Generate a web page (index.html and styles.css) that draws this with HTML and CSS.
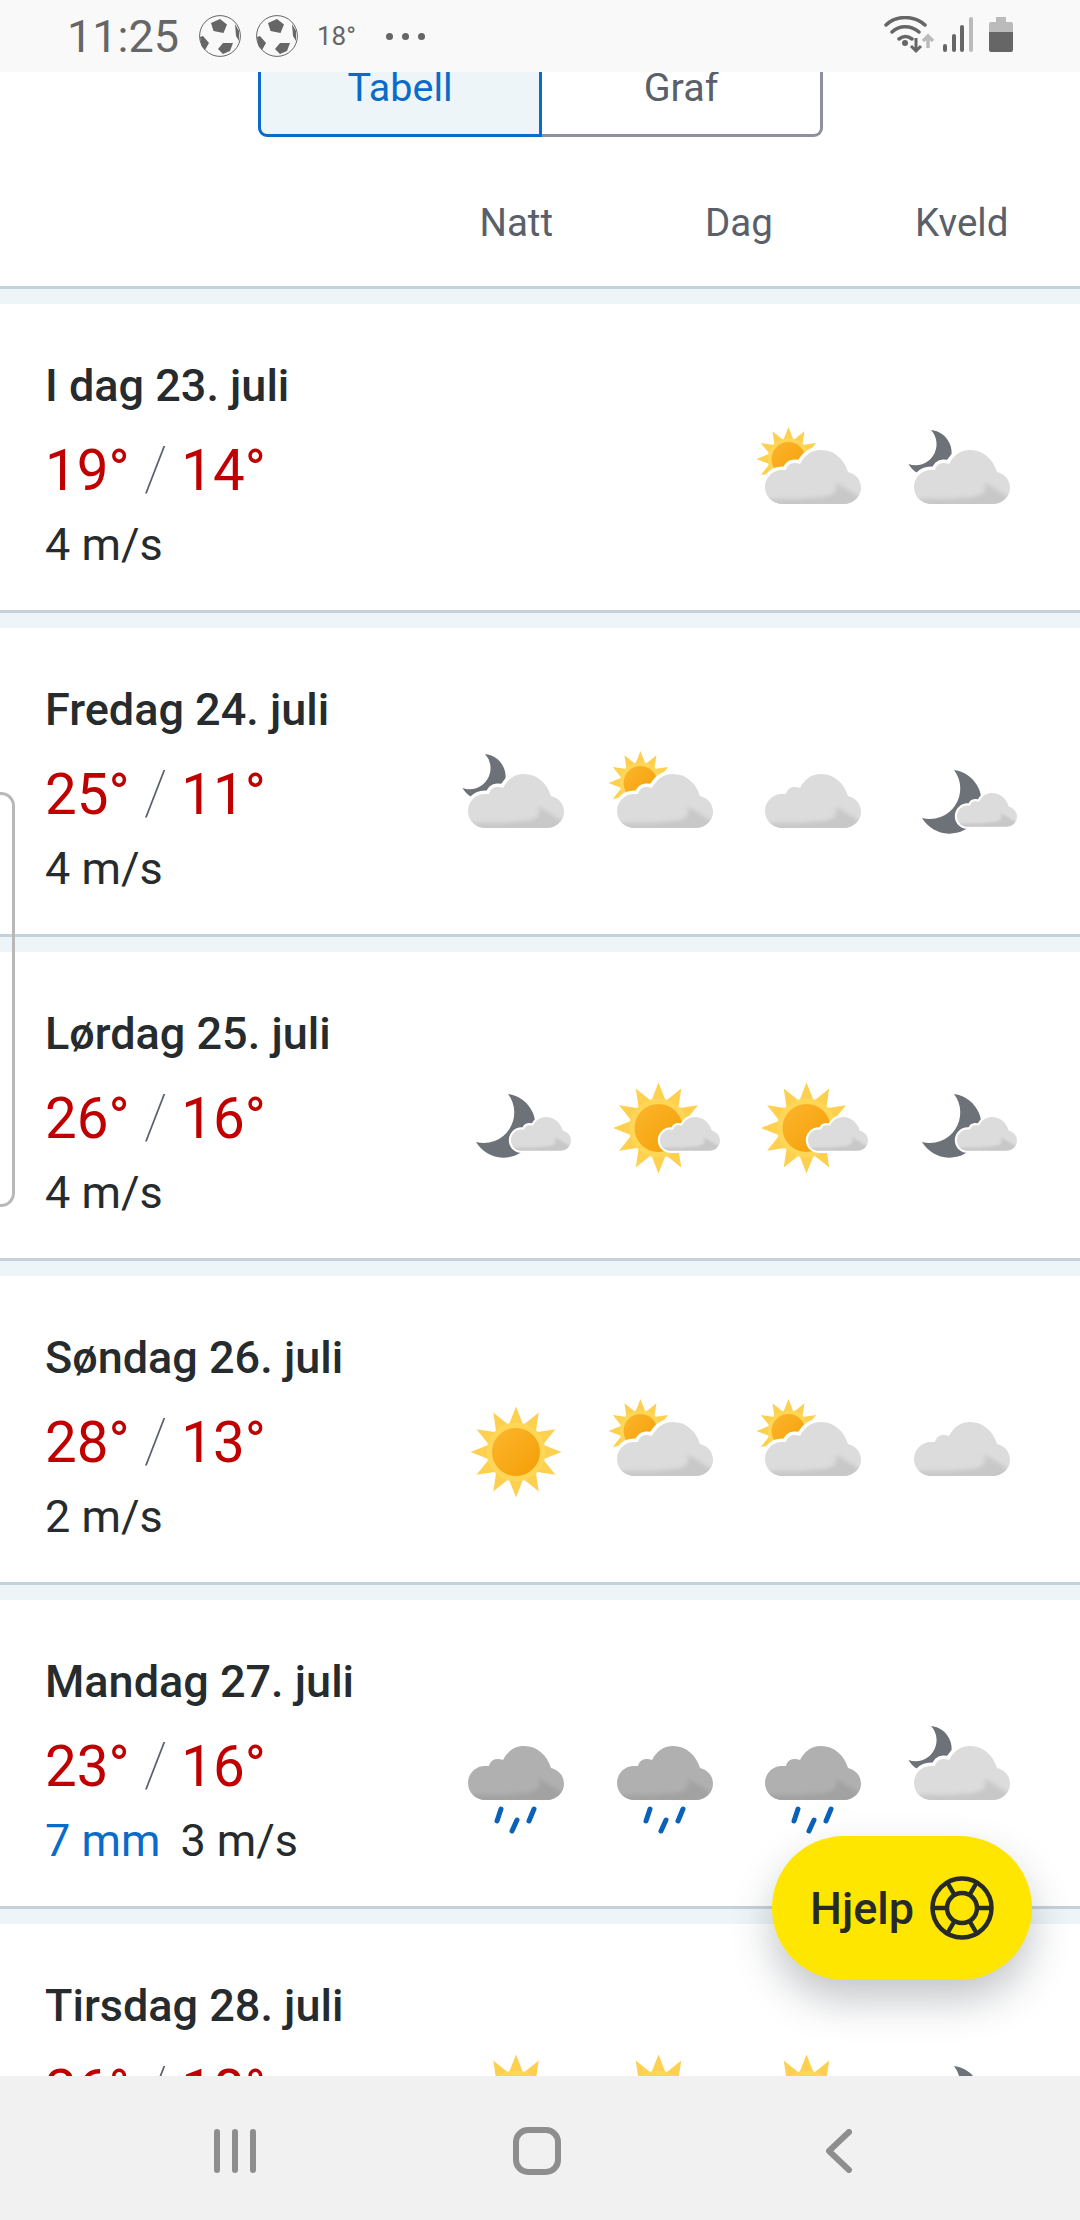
FILE: index.html
```html
<!DOCTYPE html>
<html>
<head>
<title>Værvarsel</title>
<link rel="stylesheet" href="styles.css">
</head>
<body>
<!-- Shared icon parts, all drawn on a 100x100 box -->
<svg class="icon-defs" width="0" height="0">
  <defs>
    <linearGradient id="disc" x1="0" y1="0" x2="1" y2="1">
      <stop offset="0" stop-color="#fcb62e"/>
      <stop offset="1" stop-color="#f49e04"/>
    </linearGradient>
    <filter id="soft" x="-10%" y="-10%" width="120%" height="120%">
      <feGaussianBlur stdDeviation="2"/>
    </filter>
    <path id="cloud-shape" d="M20 74H80C91 74 98 66 98 58C98 50 93 44 85 42C81 29 71 20 58 20C48 20 41 26 37 34C35 33 33 33 31 33C27 33 24 36 23 40C22 40 21 40 19 40C9 40 2 48 2 57C2 67 10 74 20 74Z"/>
    <clipPath id="cloud-clip"><use href="#cloud-shape"/></clipPath>
    <g id="shade" clip-path="url(#cloud-clip)">
      <path filter="url(#soft)" d="M-5 71C15 67 30 70 45 68C55 67 62 68 70 64C74 61 74 58 72 52L105 72V80H-5Z"/>
    </g>
    <g id="cloud">
      <use href="#cloud-shape" fill="#dcdcdc"/>
      <use href="#shade" fill="#c8c8c8"/>
    </g>
    <g id="cloud-dark">
      <use href="#cloud-shape" fill="#b0b0b0"/>
      <use href="#shade" fill="#a2a2a2"/>
    </g>
    <g id="cloud-cut">
      <use href="#cloud-shape" fill="#fff" stroke="#fff" stroke-width="7"/>
      <use href="#cloud"/>
    </g>
    <g id="sun">
      <polygon fill="#fdd050" points="50,4.5 57.25,22.95 72.75,10.6 69.8,30.2 89.4,27.25 77.05,42.75 95.5,50 77.05,57.25 89.4,72.75 69.8,69.8 72.75,89.4 57.25,77.05 50,95.5 42.75,77.05 27.25,89.4 30.2,69.8 10.6,72.75 22.95,57.25 4.5,50 22.95,42.75 10.6,27.25 30.2,30.2 27.25,10.6 42.75,22.95"/>
      <circle cx="50" cy="50" r="29.5" fill="#ffd655"/>
      <circle cx="50" cy="50" r="24" fill="url(#disc)"/>
    </g>
    <path id="moon-big" fill="#6d7278" d="M42 16A32 32 0 1 1 10 64A30.500 30.500 0 0 0 42 16Z"/>
    <path id="moon-small" fill="#6d7278" d="M19 0A23 23 0 1 1 -3.500 34A21 21 0 0 0 19 0Z"/>

    <g id="i-clear"><use href="#sun"/></g>
    <g id="i-cloudy"><use href="#cloud"/></g>
    <g id="i-sun-cloud">
      <use href="#sun" transform="translate(-9.700 -6.200) scale(.703)"/>
      <use href="#cloud-cut"/>
    </g>
    <g id="i-moon-cloud">
      <use href="#moon-small"/>
      <use href="#cloud-cut"/>
    </g>
    <g id="i-sun-small-cloud">
      <use href="#sun" transform="translate(-6.500 0)"/>
      <use href="#cloud-cut" transform="translate(43.750 26.500) scale(.625)"/>
    </g>
    <g id="i-moon-small-cloud">
      <use href="#moon-big"/>
      <use href="#cloud-cut" transform="translate(43.750 26.500) scale(.625)"/>
    </g>
    <g id="i-rain">
      <use href="#cloud-dark"/>
      <path d="M35 83L31 95M51 94L46 105M68 83L63 95" stroke="#0a62b8" stroke-width="5" stroke-linecap="round"/>
    </g>
  </defs>
</svg>

<div class="phone">
  <div class="status-bar">
    <span class="clock">11:25</span>
    <svg class="ball" viewBox="0 0 42 42">
      <circle cx="21" cy="21" r="20.400" fill="none" stroke="#666" stroke-width="1"/>
      <path fill="#666" d="M12 8L21 4L28 9.600L24.500 18L14.500 16ZM1 22L4 21L10 28L6 35L2.500 31ZM24 28L34 28L31 36L24 39L19 34ZM36 9L40 16L40 26L37 21Z"/>
    </svg>
    <svg class="ball" viewBox="0 0 42 42">
      <circle cx="21" cy="21" r="20.400" fill="none" stroke="#666" stroke-width="1"/>
      <path fill="#666" d="M12 8L21 4L28 9.600L24.500 18L14.500 16ZM1 22L4 21L10 28L6 35L2.500 31ZM24 28L34 28L31 36L24 39L19 34ZM36 9L40 16L40 26L37 21Z"/>
    </svg>
    <span class="status-temp">18°</span>
    <span class="status-dots"><i></i><i></i><i></i></span>
    <svg class="status-icons" viewBox="0 0 156 40">
      <g fill="none" stroke="#666" stroke-width="3.500" stroke-linecap="round">
        <path d="M5 9C15 -1 33 -1 44 9M11 16C18 9 30 9 38 16M18 23C22 20 27 20 31 23"/>
      </g>
      <circle cx="24" cy="27" r="3" fill="#666"/>
      <path d="M35 22V34M30 30L35 35L40 30" fill="none" stroke="#666" stroke-width="3"/>
      <path d="M47 32V20M42 25L47 20L52 25" fill="none" stroke="#bbb" stroke-width="3.500"/>
      <g fill="none" stroke-width="4" stroke-linecap="round">
        <path d="M64 30V34M73 20V34M81 11V34" stroke="#666"/>
        <path d="M90 3V34" stroke="#bbb"/>
      </g>
      <path fill="#bbb" d="M115 1H125V6H130Q132 6 132 8V17H108V8Q108 6 110 6H115Z"/>
      <path fill="#666" d="M108 16H132V34Q132 36 130 36H110Q108 36 108 34Z"/>
    </svg>
  </div>

  <div class="content">
    <div class="intro">
      <div class="toggle">
        <div class="toggle-item active">Tabell</div>
        <div class="toggle-item">Graf</div>
      </div>
      <div class="periods">
        <span>Natt</span>
        <span class="period-wide">Dag</span>
        <span>Kveld</span>
      </div>
    </div>

    <div class="day">
      <div class="day-text">
        <div class="day-title">I dag 23. juli</div>
        <div class="temps"><span>19°</span><i>/</i><span>14°</span></div>
        <div class="extra">4 m/s</div>
      </div>
      <div class="icons">
        <div></div>
        <div></div>
        <svg class="icon" viewBox="-10 -10 120 120"><use href="#i-sun-cloud"/></svg>
        <svg class="icon" viewBox="-10 -10 120 120"><use href="#i-moon-cloud"/></svg>
      </div>
    </div>

    <div class="day">
      <div class="day-text">
        <div class="day-title">Fredag 24. juli</div>
        <div class="temps"><span>25°</span><i>/</i><span>11°</span></div>
        <div class="extra">4 m/s</div>
      </div>
      <div class="icons">
        <svg class="icon" viewBox="-10 -10 120 120"><use href="#i-moon-cloud"/></svg>
        <svg class="icon" viewBox="-10 -10 120 120"><use href="#i-sun-cloud"/></svg>
        <svg class="icon" viewBox="-10 -10 120 120"><use href="#i-cloudy"/></svg>
        <svg class="icon" viewBox="-10 -10 120 120"><use href="#i-moon-small-cloud"/></svg>
      </div>
    </div>

    <div class="day">
      <div class="day-text">
        <div class="day-title">Lørdag 25. juli</div>
        <div class="temps"><span>26°</span><i>/</i><span>16°</span></div>
        <div class="extra">4 m/s</div>
      </div>
      <div class="icons">
        <svg class="icon" viewBox="-10 -10 120 120"><use href="#i-moon-small-cloud"/></svg>
        <svg class="icon" viewBox="-10 -10 120 120"><use href="#i-sun-small-cloud"/></svg>
        <svg class="icon" viewBox="-10 -10 120 120"><use href="#i-sun-small-cloud"/></svg>
        <svg class="icon" viewBox="-10 -10 120 120"><use href="#i-moon-small-cloud"/></svg>
      </div>
    </div>

    <div class="day">
      <div class="day-text">
        <div class="day-title">Søndag 26. juli</div>
        <div class="temps"><span>28°</span><i>/</i><span>13°</span></div>
        <div class="extra">2 m/s</div>
      </div>
      <div class="icons">
        <svg class="icon" viewBox="-10 -10 120 120"><use href="#i-clear"/></svg>
        <svg class="icon" viewBox="-10 -10 120 120"><use href="#i-sun-cloud"/></svg>
        <svg class="icon" viewBox="-10 -10 120 120"><use href="#i-sun-cloud"/></svg>
        <svg class="icon" viewBox="-10 -10 120 120"><use href="#i-cloudy"/></svg>
      </div>
    </div>

    <div class="day">
      <div class="day-text">
        <div class="day-title">Mandag 27. juli</div>
        <div class="temps"><span>23°</span><i>/</i><span>16°</span></div>
        <div class="extra"><span class="rain">7 mm</span>3 m/s</div>
      </div>
      <div class="icons">
        <svg class="icon" viewBox="-10 -10 120 120"><use href="#i-rain"/></svg>
        <svg class="icon" viewBox="-10 -10 120 120"><use href="#i-rain"/></svg>
        <svg class="icon" viewBox="-10 -10 120 120"><use href="#i-rain"/></svg>
        <svg class="icon" viewBox="-10 -10 120 120"><use href="#i-moon-cloud"/></svg>
      </div>
    </div>

    <div class="day">
      <div class="day-text">
        <div class="day-title">Tirsdag 28. juli</div>
        <div class="temps"><span>26°</span><i>/</i><span>18°</span></div>
        <div class="extra">3 m/s</div>
      </div>
      <div class="icons">
        <svg class="icon" viewBox="-10 -10 120 120"><use href="#i-clear"/></svg>
        <svg class="icon" viewBox="-10 -10 120 120"><use href="#i-sun-small-cloud"/></svg>
        <svg class="icon" viewBox="-10 -10 120 120"><use href="#i-sun-small-cloud"/></svg>
        <svg class="icon" viewBox="-10 -10 120 120"><use href="#i-moon-small-cloud"/></svg>
      </div>
    </div>

    <div class="edge-handle"></div>

    <div class="help-button">
      <span>Hjelp</span>
      <svg class="help-icon" viewBox="0 0 64 64" fill="none" stroke="#262b28" stroke-width="4.500">
        <circle cx="32" cy="32" r="29.500"/>
        <circle cx="32" cy="32" r="15"/>
        <path d="M2 32H17M47 32H62M17 6L24.500 19M47 6L39.500 19M17 58L24.500 45M47 58L39.500 45"/>
      </svg>
    </div>
  </div>

  <div class="nav-bar">
    <div class="nav-recent"><i></i><i></i><i></i></div>
    <div class="nav-home"></div>
    <svg class="nav-back" viewBox="0 0 26 44" fill="none" stroke="#8e8e8e" stroke-width="6" stroke-linecap="round" stroke-linejoin="round">
      <path d="M23 3L3 22L23 41"/>
    </svg>
  </div>
</div>
</body>
</html>
```

FILE: styles.css
```css
* {
  box-sizing: border-box;
}
body {
  margin: 0;
  font-family: Roboto, "Liberation Sans", sans-serif;
  background-color: white;
}
.icon-defs {
  position: absolute;
}
.phone {
  display: flex;
  flex-direction: column;
  width: 1080px;
  height: 2220px;
  overflow: hidden;
}

/* status bar */
.status-bar {
  flex: none;
  display: flex;
  align-items: center;
  height: 72px;
  padding-left: 67px;
  background-color: #f9f9f9;
  color: #666;
}
.clock {
  width: 132px;
  font-size: 45px;
}
.ball {
  width: 42px;
  height: 42px;
  margin-right: 15px;
}
.status-temp {
  width: 38px;
  font-size: 26px;
  margin-left: 4px;
}
.status-dots {
  display: flex;
  gap: 9px;
  margin-left: 31px;
}
.status-dots i {
  width: 7px;
  height: 7px;
  border-radius: 50%;
  background-color: #666;
}
.status-icons {
  align-self: flex-start;
  width: 156px;
  height: 40px;
  margin: 16px 43px 0 auto;
}

/* scrolled content */
.content {
  position: relative;
  flex: 1;
  min-height: 0;
  overflow: hidden;
  background-color: #edf5f8;
}
.intro {
  height: 217px;
  background-color: white;
  border-bottom: 3px solid #c3d2db;
  margin-bottom: 15px;
  overflow: hidden;
}
.toggle {
  display: flex;
  width: 565px;
  height: 105px;
  margin: -40px 0 0 258px;
}
.toggle-item {
  flex: 1;
  display: flex;
  align-items: flex-end;
  justify-content: center;
  padding-bottom: 23px;
  font-size: 39.500px;
  color: #596069;
  border: 3px solid #8f929e;
  border-left: none;
  border-radius: 0 0 9px 0;
}
.toggle-item.active {
  color: #0a6bc8;
  background-color: #edf5f8;
  border: 3px solid #0a6bc8;
  border-radius: 0 0 0 9px;
}
.periods,
.icons {
  display: grid;
  grid-template-columns: repeat(4, 148.5px);
}
.periods {
  margin: 63px 0 0 442px;
  font-size: 38.500px;
  line-height: 46px;
  color: #596069;
  text-align: center;
}
.period-wide {
  grid-column: span 2;
}

/* one row per day */
.day {
  display: flex;
  justify-content: space-between;
  height: 309px;
  padding: 0 44px 0 45px;
  background-color: white;
  border-bottom: 3px solid #c3d2db;
  margin-bottom: 15px;
}
.day-text {
  padding-top: 56px;
  color: #262b2e;
}
.day-title {
  font-size: 45px;
  font-weight: 500;
  line-height: 52px;
}
.temps {
  font-size: 56.500px;
  line-height: 64px;
  margin-top: 26px;
  color: #c00000;
  white-space: nowrap;
}
.temps i {
  font-style: normal;
  font-size: 62px;
  font-weight: 100;
  line-height: 1;
  color: #596069;
  margin: 0 14px;
}
.extra {
  font-size: 45px;
  line-height: 50px;
  margin-top: 17px;
}
.rain {
  color: #0a6bc8;
  margin-right: 20px;
}
.icons {
  padding-top: 116px;
  justify-items: center;
  align-items: start;
}
.icon {
  display: block;
  width: 120px;
  height: 120px;
}

/* floating things */
.edge-handle {
  position: absolute;
  left: -6px;
  top: 720px;
  width: 21px;
  height: 415px;
  border: 3px solid #b8b8b8;
  border-radius: 0 14px 14px 0;
}
.help-button {
  position: absolute;
  left: 772px;
  top: 1764px;
  display: flex;
  align-items: center;
  width: 260px;
  height: 144px;
  padding-left: 38px;
  border-radius: 72px;
  background-color: #ffe600;
  box-shadow: 0 20px 40px rgba(40, 50, 60, 0.28);
  color: #262b28;
  font-size: 45px;
  font-weight: 500;
}
.help-icon {
  width: 64px;
  height: 64px;
  margin-left: 16px;
}

/* navigation bar */
.nav-bar {
  flex: none;
  display: flex;
  align-items: center;
  height: 144px;
  padding-top: 5px;
  background-color: #f1f1f1;
}
.nav-recent {
  display: flex;
  gap: 12px;
  margin-left: 214px;
}
.nav-recent i {
  width: 6px;
  height: 44px;
  border-radius: 3px;
  background-color: #8e8e8e;
}
.nav-home {
  width: 48px;
  height: 48px;
  margin-left: 257px;
  border: 6px solid #8e8e8e;
  border-radius: 15px;
}
.nav-back {
  width: 26px;
  height: 44px;
  margin-left: 265px;
}
```
